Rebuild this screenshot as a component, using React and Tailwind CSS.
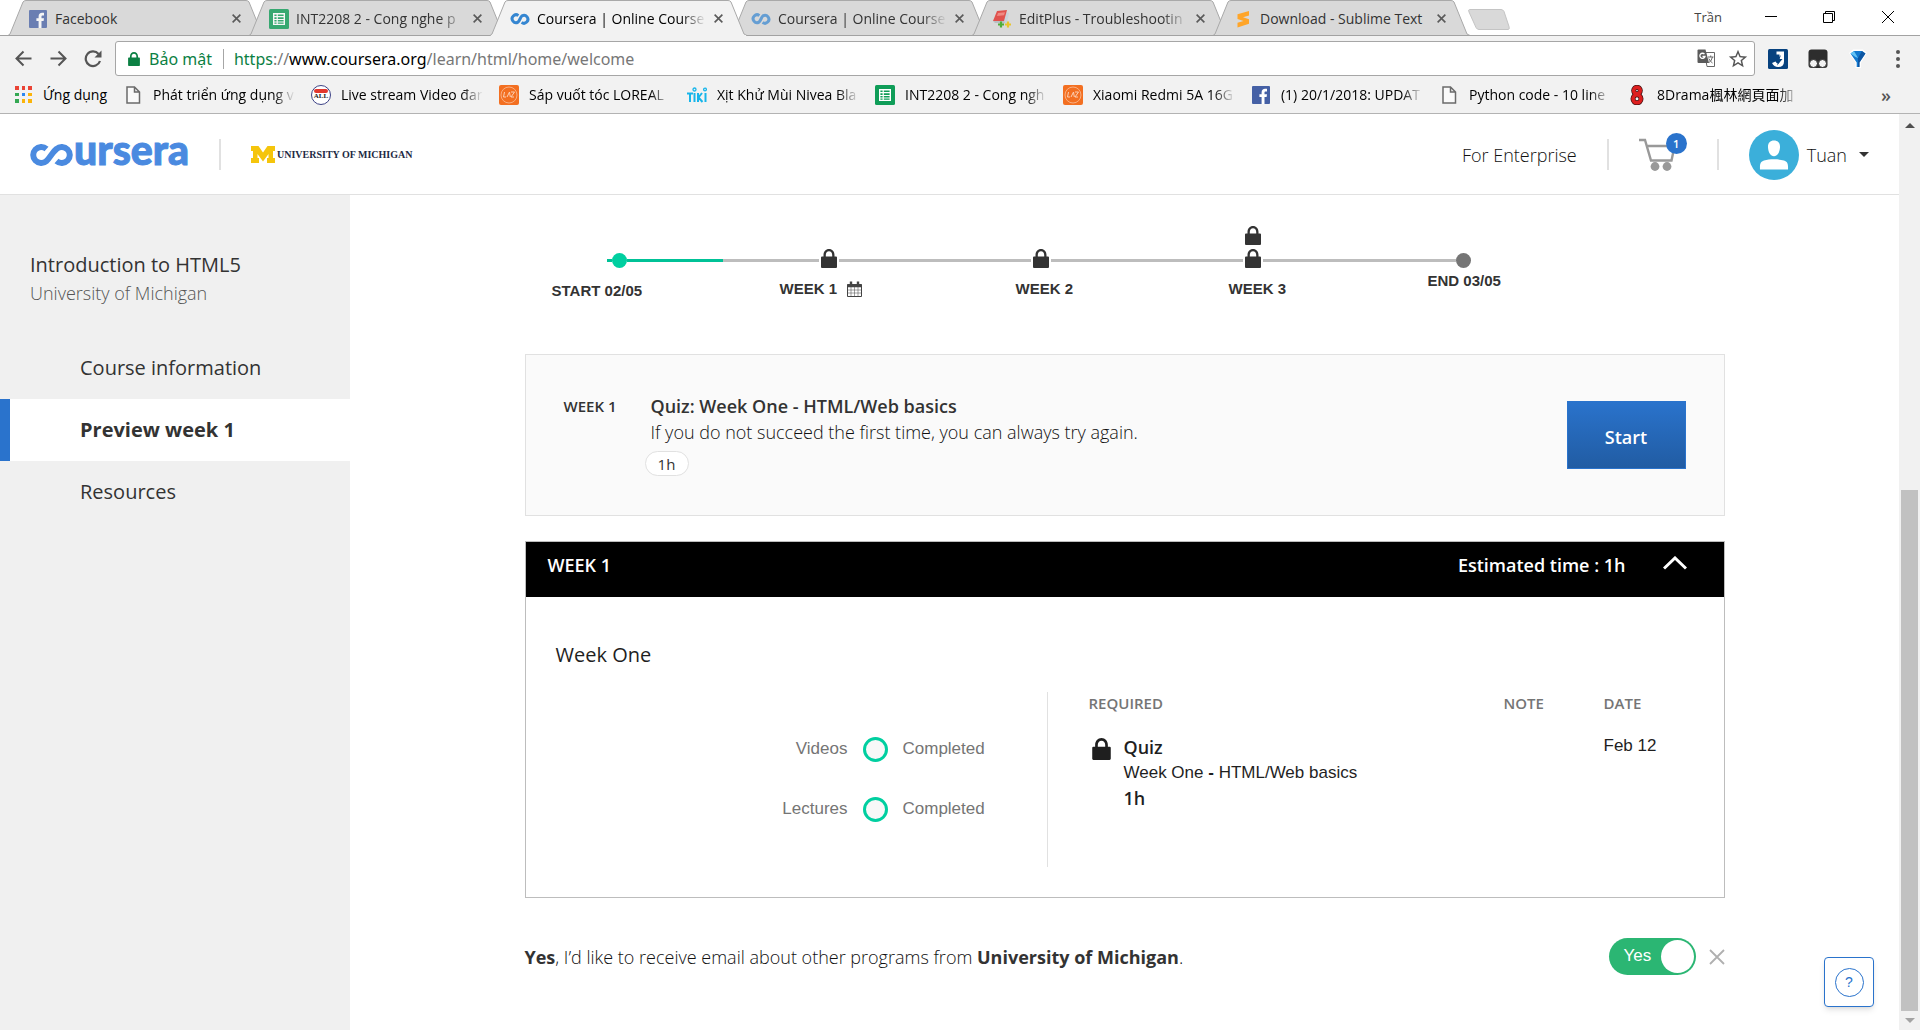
import React from "react";
import { MdStarBorder } from "react-icons/md";

/* ---------- small drawings ---------- */

const FacebookIcon = ({ faded }) => (
  <svg viewBox="0 0 20 20" className={faded ? "size-5 shrink-0 opacity-75" : "size-5 shrink-0"}>
    <rect x="1" y="1" width="18" height="18" rx="1" fill="#4560a5" />
    <path d="M10.6 19v-7H8.4V9.3h2.2V7.4c0-2.4 1.4-3.6 3.5-3.6.9 0 1.7.1 1.9.1v2.5h-1.2c-1.1 0-1.3.5-1.3 1.3v1.6H16l-.4 2.7h-2.1v7z" fill="#fff" />
  </svg>
);

const SheetsIcon = ({ faded }) => (
  <svg viewBox="0 0 20 20" className={faded ? "size-5 shrink-0 opacity-80" : "size-5 shrink-0"}>
    <rect width="20" height="20" rx="1.5" fill="#0f9d58" />
    <path d="M4 4h12v12H4z" fill="#fff" />
    <path d="M5.4 5.4h2.2v1.7H5.4zM8.8 5.4h5.8v1.7H8.8zM5.4 8.2h2.2v1.7H5.4zM8.8 8.2h5.8v1.7H8.8zM5.4 11h2.2v1.6H5.4zM8.8 11h5.8v1.6H8.8zM5.4 13.6h2.2v1.2H5.4zM8.8 13.6h5.8v1.2H8.8z" fill="#0f9d58" />
  </svg>
);

const InfinityIcon = ({ faded }) => (
  <svg viewBox="0 0 20 20" className={faded ? "size-5 shrink-0 opacity-70" : "size-5 shrink-0"}>
    <path d="M8.4 6.6A3.9 3.9 0 1 0 8 13.1C9.6 11.9 10.4 8.1 12 6.9a3.9 3.9 0 1 1-.4 6.5" fill="none" stroke="#3586d1" strokeWidth="3" />
  </svg>
);

const EditPlusIcon = () => (
  <svg viewBox="0 0 20 20" className="size-5 shrink-0">
    <path d="M13 3l4 1-2 10-4 1z" fill="#c9d3da" />
    <path d="M5 2l10-1-3 11H1z" fill="#e0524e" />
    <path d="M6 4l7-.8-1 3L5 7z" fill="#f08a83" />
    <path d="M1 12h11l1 2H3z" fill="#b8bfc4" />
    <path d="M9 12.5v6M6 15.5h6" stroke="#4fae3a" strokeWidth="2.2" />
    <path d="M16 12.5v6M13 15.5h6" stroke="#e8c52c" strokeWidth="2.2" />
  </svg>
);

const SublimeIcon = () => (
  <svg viewBox="0 0 20 20" className="size-5 shrink-0">
    <path d="M4.5 5.2L16 2v4.500L10 8.300l6 2v4.500L4.500 18.500v-4.700l6-1.800-6-2z" fill="#ffa529" />
  </svg>
);

const DocIcon = () => (
  <svg viewBox="0 0 20 20" className="size-5 shrink-0">
    <path d="M4 2h7.500L16.500 7v11H4zM11.500 2v5h5" fill="#fafafa" stroke="#6b6b6b" strokeWidth="1.500" />
  </svg>
);

const LiveIcon = () => (
  <span className="flex size-5 shrink-0 flex-col items-center justify-center rounded-full border border-[#3d4286] bg-white">
    <span className="h-1 w-3.5 rounded-sm bg-[#e2382e]" />
    <span className="font-['Liberation_Serif',serif] text-[7px] leading-[7px] font-bold text-[#222]">ALL</span>
  </span>
);

const LazadaIcon = () => (
  <svg viewBox="0 0 20 20" className="size-5 shrink-0">
    <rect width="20" height="20" rx="2" fill="#f36f21" />
    <circle cx="10" cy="10" r="8" fill="none" stroke="#f9b58c" strokeWidth=".9" />
    <path d="M5.500 7l-1 5h2.500M8 12l2.500-5 .8 5M12 7h3.500l-3.500 5h3" fill="none" stroke="#fbd0b5" strokeWidth="1" />
  </svg>
);

const TikiIcon = () => (
  <svg viewBox="0 0 20 20" className="size-5 shrink-0">
    <g fill="none" stroke="#17b5ea" strokeWidth="2">
      <path d="M0 8.500h6M3 8.500V17M7.500 8V17M11 8v9M15 8l-3.500 4.500L15.500 17M18.500 8v9" />
      <circle cx="7.500" cy="4.500" r="1.500" strokeWidth="1.300" />
      <circle cx="18" cy="4.500" r="1.400" strokeWidth="1.300" />
    </g>
  </svg>
);

const EightIcon = () => (
  <svg viewBox="0 0 20 20" className="size-5 shrink-0">
    <g fill="none">
      <g stroke="#3a1010" strokeWidth="5">
        <circle cx="10" cy="5.600" r="3.300" />
        <circle cx="10" cy="13.800" r="4" />
      </g>
      <g stroke="#dd1f1f" strokeWidth="3.600">
        <circle cx="10" cy="5.600" r="3.300" />
        <circle cx="10" cy="13.800" r="4" />
      </g>
    </g>
  </svg>
);

const AppsIcon = () => (
  <span className="grid size-[17px] shrink-0 grid-cols-3 gap-[3px]">
    {["bg-[#ea4335]", "bg-[#ea4335]", "bg-[#ea4335]", "bg-[#34a853]", "bg-[#2d87f0]", "bg-[#fbb40a]", "bg-[#34a853]", "bg-[#fbb40a]", "bg-[#fbb40a]"].map((c, i) => (
      <span key={i} className={c} />
    ))}
  </span>
);

const Lock = ({ className }) => (
  <svg viewBox="0 0 16 19" className={className} fill="currentColor">
    <path d="M0 8.500q0-1 1-1h1.500V6C2.500 2.500 4.800 0 8 0s5.500 2.500 5.500 6v1.500H15q1 0 1 1V18q0 1-1 1H1q-1 0-1-1zM4.800 7.500h6.400V6c0-2.200-1.300-3.700-3.200-3.700S4.800 3.800 4.800 6z" />
  </svg>
);

const CalendarIcon = () => (
  <svg viewBox="0 0 15 16" className="h-4 w-[15px]" fill="none" stroke="#444">
    <path d="M.5 3.500h14v12H.5z" />
    <path d="M.5 4h14M.5 5.500h14" strokeWidth="1.500" />
    <path d="M.5 9h14M.5 12h14M4 6v9M7.500 6v9M11 6v9" strokeWidth=".5" />
    <path d="M4 .5v4M11 .5v4" strokeWidth="2.400" />
  </svg>
);

/* ---------- browser chrome ---------- */

const tabs = [
  { title: "Facebook", icon: <FacebookIcon faded /> },
  { title: "INT2208 2 - Cong nghe p", icon: <SheetsIcon faded />, long: true },
  { title: "Coursera | Online Course", icon: <InfinityIcon />, active: true, long: true },
  { title: "Coursera | Online Course", icon: <InfinityIcon faded />, long: true },
  { title: "EditPlus - Troubleshootin", icon: <EditPlusIcon />, long: true },
  { title: "Download - Sublime Text", icon: <SublimeIcon /> },
];

const fade = "mask-r-from-85% mask-r-to-100%";

function Tab({ tab }) {
  return (
    <div className={`relative -ml-4 flex h-9 w-[257px] min-w-0 items-center pt-px pr-5 pl-5 ${tab.active ? "z-10" : ""}`}>
      <svg viewBox="0 0 257 36" preserveAspectRatio="none" className="absolute inset-0 size-full">
        <path d="M0 35.500L2 34 15 2Q16 .5 18 .5H238Q240 .5 241 2L254 34 257 35.500" fill={tab.active ? "#f2f2f2" : "#d9d9d9"} stroke="#a9a9a9" />
        {tab.active ? <path d="M1 35.500H256" stroke="#f2f2f2" /> : <path d="M0 35.500H257" stroke="#a2a2a2" />}
      </svg>
      <button className="relative flex min-w-0 flex-1 items-center gap-[7px] text-left">
        {tab.icon}
        <span className={`flex-1 overflow-hidden whitespace-nowrap ${tab.long ? fade : ""} ${tab.active ? "text-black" : "text-[#333]"}`}>{tab.title}</span>
      </button>
      <button aria-label="Close tab" className="relative ml-1 p-1">
        <svg viewBox="0 0 10 10" className="size-[9px]" stroke="#5a5a5a" strokeWidth="1.800">
          <path d="M.7.7l8.600 8.600M9.300.7L.7 9.300" />
        </svg>
      </button>
    </div>
  );
}

const bookmarks = [
  { title: "Phát triển ứng dụng v", icon: <DocIcon /> },
  { title: "Live stream Video đar", icon: <LiveIcon /> },
  { title: "Sáp vuốt tóc LOREAL", icon: <LazadaIcon /> },
  { title: "Xịt Khử Mùi Nivea Bla", icon: <TikiIcon /> },
  { title: "INT2208 2 - Cong ngh", icon: <SheetsIcon /> },
  { title: "Xiaomi Redmi 5A 16G", icon: <LazadaIcon /> },
  { title: "(1) 20/1/2018: UPDAT", icon: <FacebookIcon /> },
  { title: "Python code - 10 line", icon: <DocIcon /> },
  { title: "8Drama楓林網頁面加", icon: <EightIcon /> },
];

function BrowserChrome() {
  return (
    <div className="shrink-0 font-['Open_Sans','Noto_Sans_CJK_TC',sans-serif] text-sm text-black">
      <div className="flex h-9 border-b border-[#a2a2a2] bg-white">
        <div className="flex h-9 min-w-0 pl-6">
          {tabs.map((t, i) => (
            <Tab key={i} tab={t} />
          ))}
        </div>
        <button aria-label="New tab" className="-ml-0.5 mt-[9px] h-[21px] w-[42px] shrink-0">
          <svg viewBox="0 0 42 21" className="size-full">
            <path d="M1.500.5H33q2 0 3 2l5 15q1 3-1 3H11q-2 0-3-2L1 3Q0 .5 1.500.5z" fill="#d9d9d9" stroke="#c4c4c4" />
          </svg>
        </button>
        <div className="ml-auto flex items-center pr-[26px] pb-px">
          <span className="mr-[43px] text-[13px] text-[#444]">Trần</span>
          <button aria-label="Minimize" className="mr-[46px]">
            <svg viewBox="0 0 12 12" className="size-3" stroke="#000"><path d="M0 5.500h12" /></svg>
          </button>
          <button aria-label="Restore" className="mr-[47px]">
            <svg viewBox="0 0 12 12" className="size-3" fill="none" stroke="#000"><path d="M.5 2.500h9v9h-9zM2.500 2.500v-2h9v9h-2" /></svg>
          </button>
          <button aria-label="Close">
            <svg viewBox="0 0 12 12" className="size-3" stroke="#000"><path d="M0 0l12 12M12 0L0 12" /></svg>
          </button>
        </div>
      </div>

      <div className="flex h-[45px] items-center bg-[#f2f2f2] pr-5 pl-[15px]">
        <button aria-label="Back">
          <svg viewBox="0 0 17 17" className="size-[17px]" fill="none" stroke="#555" strokeWidth="2"><path d="M16.500 8.500H2M8.500 1.500l-7 7 7 7" /></svg>
        </button>
        <button aria-label="Forward" className="ml-[18px]">
          <svg viewBox="0 0 17 17" className="size-[17px]" fill="none" stroke="#555" strokeWidth="2"><path d="M.5 8.500H15M8.500 1.500l7 7-7 7" /></svg>
        </button>
        <button aria-label="Reload" className="ml-[17px]">
          <svg viewBox="0 0 18 18" className="size-[18px]" fill="none" stroke="#555" strokeWidth="2.200">
            <path d="M14.600 4A7.300 7.300 0 1 0 16 11" />
            <path d="M17.500.5v7h-7z" fill="#555" stroke="none" />
          </svg>
        </button>
        <div className="ml-[13px] flex h-[35px] flex-1 items-center rounded-[3px] border border-[#a6a6a6] bg-white pr-[5px] pl-3 font-['Noto_Sans',sans-serif] text-base">
          <Lock className="h-3.5 w-3 text-[#0b8043]" />
          <span className="ml-[9px] text-[#0b8043]">Bảo mật</span>
          <span className="mr-[10px] ml-[11px] h-5 w-px bg-[#a6a6a6]" />
          <label htmlFor="address" className="flex">
            <span className="text-[#0b8043]">https</span>
            <span className="text-[#777]">://</span>
            <span>www.coursera.org</span>
          </label>
          <input id="address" type="text" defaultValue="/learn/html/home/welcome" className="min-w-0 flex-1 text-[#777] outline-none" />
          <button aria-label="Translate this page">
            <svg viewBox="0 0 19 19" className="size-[19px]">
              <path d="M7.500 3.500h10v14H10z" fill="#fff" stroke="#666" />
              <path d="M1.500.5h7l3.500 13.500H1.500q-1 0-1-1v-11.500q0-1 1-1z" fill="#5a5a5a" />
              <path d="M7.500 5.200A2.600 2.600 0 1 0 8 7.500H5.500" fill="none" stroke="#fff" strokeWidth="1.300" />
              <path d="M11 8h5.500M13.700 6.500V8M15.500 8q-1 4-4 6M11.800 9.500q1.200 2.800 3.700 4.500" fill="none" stroke="#666" />
            </svg>
          </button>
          <button aria-label="Bookmark this page" className="ml-[11px]">
            <MdStarBorder className="size-[22px] text-[#555]" />
          </button>
        </div>
        <button aria-label="Extension J" className="ml-[13px]">
          <svg viewBox="0 0 20 20" className="size-5">
            <rect width="20" height="20" rx="1.500" fill="#07427f" />
            <path d="M8.500 2.500H16v10q0 5.500-6 5.500-4 0-6-4l3.500-1.500q1 2 2.500 2 1.500 0 1.500-2V5.500h-3z" fill="#fff" />
            <path d="M13 6l-5.500 5.500h3L9 16.500l5.500-6.500h-3z" fill="#07427f" />
          </svg>
        </button>
        <button aria-label="Extension tampermonkey" className="ml-5">
          <svg viewBox="0 0 20 20" className="size-5">
            <rect x=".5" y=".5" width="19" height="18.500" rx="3" fill="#2d2d2d" />
            <circle cx="5.500" cy="14.500" r="4" fill="#f2f2f2" stroke="#2d2d2d" />
            <circle cx="14.500" cy="14.500" r="4" fill="#f2f2f2" stroke="#2d2d2d" />
          </svg>
        </button>
        <button aria-label="Extension Y" className="ml-5">
          <svg viewBox="0 0 20 20" className="size-5">
            <path d="M1 4L5 .5h10L19 4l-6 9.500V19H7.500v-5.500z" fill="#fff" />
            <path d="M2.500 4.500L6 2h8l3.500 2.500-6 9V18H8.700v-4.500z" fill="#1279cf" />
            <path d="M6 2l4 7L7.500 8 2.500 4.500z" fill="#64c4f5" />
            <path d="M14 2l-4 7v9h1.500v-4.500l6-9z" fill="#0a3f86" opacity=".6" />
          </svg>
        </button>
        <button aria-label="Menu" className="ml-7">
          <svg viewBox="0 0 4 18" className="h-[18px] w-1" fill="#555">
            <circle cx="2" cy="2" r="2" /><circle cx="2" cy="9" r="2" /><circle cx="2" cy="16" r="2" />
          </svg>
        </button>
      </div>

      <nav className="flex h-[33px] items-center gap-4 border-b border-[#b3b3b3] bg-[#f2f2f2] pr-[29px] pb-[5px] pl-[15px]">
        <a href="#apps" className="flex items-center gap-[11px]">
          <AppsIcon />
          Ứng dụng
        </a>
        {bookmarks.map((b) => (
          <a key={b.title} href="#bookmark" className="flex w-[172px] min-w-0 items-center gap-[10px] whitespace-nowrap">
            {b.icon}
            <span className={`flex-1 overflow-hidden ${fade}`}>{b.title}</span>
          </a>
        ))}
        <button className="ml-auto text-lg leading-5 font-semibold text-[#555]">»</button>
      </nav>
    </div>
  );
}

/* ---------- site header ---------- */

function SiteHeader() {
  return (
    <header className="flex h-[81px] shrink-0 items-center border-b border-[#e1e1e1] bg-white pt-px pr-[30px] pl-[30px] text-lg font-light text-[#111]">
      <a href="#home" aria-label="coursera" className="flex h-[22px] w-[159px] items-center text-[#4a8ae0]">
        <svg viewBox="0 0 44 22" className="h-[22px] w-11 shrink-0">
          <path d="M16.500 5A8 8 0 1 0 16.500 17C20.500 13 22.500 8 26.500 5A8 8 0 1 1 26.500 17" fill="none" stroke="currentColor" strokeWidth="6" />
        </svg>
        <span className="-mt-[9px] font-['Lato',sans-serif] text-[41px] leading-[22px] font-black [-webkit-text-stroke:1px]">ursera</span>
      </a>
      <span className="ml-[30px] h-[31px] w-0.5 bg-[#e1e1e1]" />
      <a href="#michigan" className="ml-[30px] flex items-center gap-0.5 text-[#1d2a44]">
        <svg viewBox="0 0 24 17" className="h-[17px] w-6">
          <path d="M0 0h7.500L12 6.500 16.500 0H24v5h-2v7h2v5h-8v-5h1.500V8L12 15.500 6.500 8v4H8v5H0v-5h2V5H0z" fill="#f5c50c" />
        </svg>
        <span className="font-['Liberation_Serif',serif] text-[10px] font-bold whitespace-nowrap">UNIVERSITY OF MICHIGAN</span>
      </a>
      <a href="#enterprise" className="ml-auto">For Enterprise</a>
      <span className="ml-[30px] h-[31px] w-0.5 bg-[#e1e1e1]" />
      <button aria-label="Cart, 1 item" className="relative ml-[30px]">
        <svg viewBox="0 0 36 33" className="h-[33px] w-9" fill="none" stroke="#999" strokeWidth="2.400">
          <path d="M0 2h6l6 20.500h20.500L36 6M8 8h26" />
          <circle cx="16" cy="28.500" r="4.400" fill="#999" stroke="none" />
          <circle cx="28" cy="28.500" r="4.400" fill="#999" stroke="none" />
        </svg>
        <span className="absolute -top-[5px] -right-3 flex size-[21px] items-center justify-center rounded-full bg-[#2a73cc] text-[11px] font-semibold text-white">1</span>
      </button>
      <span className="ml-[42px] h-[31px] w-0.5 bg-[#e1e1e1]" />
      <button className="ml-[30px] flex items-center gap-2">
        <svg viewBox="0 0 50 50" className="size-[50px]">
          <circle cx="25" cy="25" r="25" fill="#3bafda" />
          <path d="M25 10.500c4 0 6.300 2.700 6 7-.3 4.800-2.600 8.800-6 8.800s-5.700-4-6-8.800c-.3-4.300 2-7 6-7zM11 39.500c-.3-5.500.5-8 4-9 3-.8 6-1.300 10-1.300s7 .5 10 1.300c3.500 1 4.300 3.500 4 9z" fill="#fff" />
        </svg>
        Tuan
        <svg viewBox="0 0 10 5" className="ml-1 h-[5px] w-[10px]"><path d="M0 0h10L5 5z" fill="#333" /></svg>
      </button>
    </header>
  );
}

function Sidebar() {
  const item = "flex h-[62px] items-center border-l-[10px] pl-[70px] text-xl";
  return (
    <aside className="w-[350px] shrink-0 bg-[#f0f0f0] pt-[56px] text-[#333]">
      <h1 className="pl-[30px] text-xl">Introduction to HTML5</h1>
      <p className="pl-[30px] text-lg font-light text-[#555]">University of Michigan</p>
      <nav className="mt-[30px]">
        <a href="#info" className={`${item} border-transparent`}>Course information</a>
        <a href="#week1" className={`${item} border-[#2a73cc] bg-white font-bold`}>Preview week 1</a>
        <a href="#resources" className={`${item} border-transparent`}>Resources</a>
      </nav>
    </aside>
  );
}

/* ---------- main content ---------- */

function Milestone({ extra }) {
  return (
    <span className="relative flex w-5 justify-center pb-1 text-[#333]">
      {extra && <Lock className="absolute -top-[23px] h-[19px] w-4" />}
      <Lock className="h-[19px] w-4" />
    </span>
  );
}

function Timeline() {
  const seg = "h-[3px] flex-1 bg-[#bdbdbd]";
  return (
    <section className="font-['Liberation_Sans',sans-serif] text-[15px] leading-5 font-bold text-[#333]">
      <div className="mr-[254px] ml-[82px] flex h-5 items-center">
        <span className="h-[3px] w-[5px] bg-[#00c297]" />
        <span className="size-[15px] rounded-full bg-[#00cfa0]" />
        <span className="flex flex-1">
          <span className="h-[3px] flex-1 bg-[#00c297]" />
          <span className={seg} />
        </span>
        <Milestone />
        <span className={seg} />
        <Milestone />
        <span className={seg} />
        <Milestone extra />
        <span className={seg} />
        <span className="size-[15px] rounded-full bg-[#757575]" />
      </div>
      <div className="mt-px mr-[223px] ml-[27px] grid grid-cols-[228fr_236fr_213fr_199fr_74fr] whitespace-nowrap">
        <span className="pt-[10px]">START 02/05</span>
        <span className="flex items-center gap-[10px] pt-2 pb-0.5">WEEK 1 <CalendarIcon /></span>
        <span className="pt-2">WEEK 2</span>
        <span className="pt-2">WEEK 3</span>
        <span>END 03/05</span>
      </div>
    </section>
  );
}

function NextItem() {
  return (
    <section className="mt-[53px] flex items-start border border-[#e1e1e1] bg-[#fafafa] px-[38px] pt-[38px] pb-[39px] text-lg leading-[26px] text-[#333]">
      <p className="w-[87px] text-[15px] leading-[26px] font-semibold">WEEK 1</p>
      <div className="flex-1">
        <h2 className="font-semibold">Quiz: Week One - HTML/Web basics</h2>
        <p className="font-light text-[#111]">If you do not succeed the first time, you can always try again.</p>
        <span className="mt-1.5 -ml-1.5 flex h-[25px] w-11 items-center justify-center rounded-full border border-[#e1e1e1] bg-white text-[15px]">1h</span>
      </div>
      <button className="mt-2 h-[68px] w-[119px] border border-[#2a73cc] bg-linear-to-b from-[#2a73cc] to-[#215ca3] pt-1 font-semibold text-white">Start</button>
    </section>
  );
}

function ProgressRow({ label }) {
  return (
    <div className="grid h-[60px] grid-cols-[1fr_25px_144px] items-center gap-x-[15px]">
      <span className="text-right">{label}</span>
      <span className="size-[25px] rounded-full border-[3px] border-[#00cfa0] bg-[#f8f8f8]" />
      <span>Completed</span>
    </div>
  );
}

function WeekCard() {
  return (
    <section className="mt-[25px] border border-[#bdbdbd] bg-white text-[#1f1f1f]">
      <button className="flex h-[55px] w-full items-center bg-black pr-[37px] pb-[9px] pl-[22px] text-lg font-semibold text-white">
        WEEK 1
        <span className="ml-auto">Estimated time : 1h</span>
        <svg viewBox="0 0 24 14" className="mb-1 ml-[37px] h-3.5 w-6" fill="none" stroke="#fff" strokeWidth="3"><path d="M1 12.500L12 2l11 10.500" /></svg>
      </button>
      <h3 className="mt-11 pl-[30px] text-xl">Week One</h3>
      <div className="mt-[23px] mb-[30px] grid h-[175px] grid-cols-[522fr_676fr] font-['Liberation_Sans',sans-serif] text-[17px]">
        <div className="border-r border-[#e1e1e1] pt-[27px] text-[#757575]">
          <ProgressRow label="Videos" />
          <ProgressRow label="Lectures" />
        </div>
        <div className="pl-[41px]">
          <table className="w-full table-fixed text-left">
            <thead className="font-['Open_Sans',sans-serif] text-[15px] leading-[22px] text-[#757575]">
              <tr>
                <th className="font-semibold">REQUIRED</th>
                <th className="w-[100px] font-semibold">NOTE</th>
                <th className="w-[120px] font-semibold">DATE</th>
              </tr>
            </thead>
            <tbody>
              <tr className="align-top">
                <td className="flex pt-[21px] leading-[25px]">
                  <Lock className="mt-[3px] mr-[13px] ml-[3px] h-[22px] w-[19px]" />
                  <div>
                    <p className="font-['Open_Sans',sans-serif] text-lg leading-[25px] font-semibold">Quiz</p>
                    <p>Week One <b>-</b> HTML/Web basics</p>
                    <p className="font-['Open_Sans',sans-serif] text-lg leading-[26px] font-semibold">1h</p>
                  </div>
                </td>
                <td />
                <td className="pt-[19px] leading-[25px]">Feb 12</td>
              </tr>
            </tbody>
          </table>
        </div>
      </div>
    </section>
  );
}

function EmailOptIn() {
  return (
    <section className="mt-10 flex items-center text-lg font-light text-[#111]">
      <label htmlFor="optin" className="flex-1">
        <b className="font-bold text-[#333]">Yes</b>, I’d like to receive email about other programs from <b className="font-bold text-[#333]">University of Michigan</b>.
      </label>
      <span className="relative flex h-[37px] w-[87px] items-center justify-between rounded-full bg-[#2bb673] pr-0.5 pl-[15px] font-['Liberation_Sans',sans-serif] text-[17px] font-normal text-white">
        Yes
        <span className="size-[33px] rounded-full bg-white" />
        <input id="optin" type="checkbox" defaultChecked className="absolute inset-0 size-full cursor-pointer opacity-0" />
      </span>
      <button aria-label="Dismiss" className="ml-[13px]">
        <svg viewBox="0 0 16 16" className="size-4" stroke="#b0b0b0" strokeWidth="1.800"><path d="M1 1l14 14M15 1L1 15" /></svg>
      </button>
    </section>
  );
}

function Scrollbar() {
  return (
    <div className="flex w-[21px] shrink-0 flex-col items-center bg-[#f1f1f1]">
      <span className="flex h-[21px] items-center pt-px"><svg viewBox="0 0 10 5" className="h-[5px] w-[10px]"><path d="M0 5h10L5 0z" fill="#505050" /></svg></span>
      <span className="flex-[355]" />
      <span className="w-[17px] flex-[521] bg-[#c1c1c1]" />
      <span className="flex h-[19px] items-center"><svg viewBox="0 0 10 5" className="h-[5px] w-[10px]"><path d="M0 0h10L5 5z" fill="#a3a3a3" /></svg></span>
    </div>
  );
}

export default function App() {
  return (
    <div className="flex h-screen flex-col bg-white font-['Open_Sans',sans-serif]">
      <BrowserChrome />
      <div className="flex min-h-0 flex-1">
        <div className="relative flex min-w-0 flex-1 flex-col">
          <SiteHeader />
          <div className="flex min-h-0 flex-1 overflow-hidden">
            <Sidebar />
            <main className="min-w-0 flex-1 pt-[55px]">
              <div className="mx-auto max-w-[1200px]">
                <Timeline />
                <NextItem />
                <WeekCard />
                <EmailOptIn />
              </div>
            </main>
          </div>
          <button aria-label="Help" className="absolute right-[25px] bottom-[23px] flex size-[50px] items-center justify-center rounded-sm border border-[#2a73cc] bg-white shadow-md">
            <span className="flex size-[29px] items-center justify-center rounded-full border border-[#2a73cc] font-['Liberation_Sans',sans-serif] text-sm text-[#2a73cc]">?</span>
          </button>
        </div>
        <Scrollbar />
      </div>
    </div>
  );
}
